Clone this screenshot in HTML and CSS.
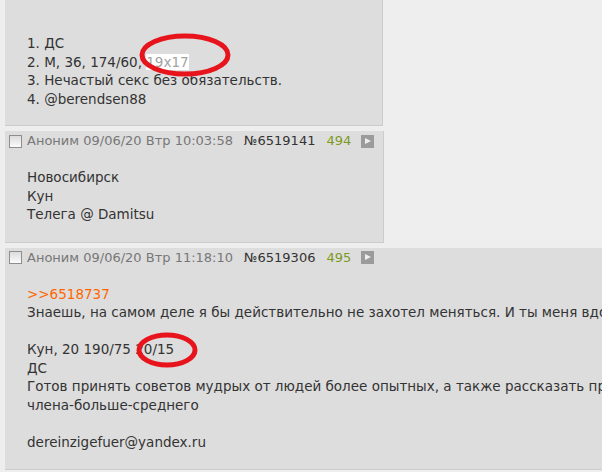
FILE: index.html
```html
<!DOCTYPE html>
<html lang="ru">

<head>
    <meta charset="UTF-8" />
    <meta name="viewport" content="width=device-width, initial-scale=1.0" />
    <title>Тред</title>
    <link rel="stylesheet" href="styles.css">
</head>

<body>
    <div class="thread">

        <!-- пост выше экрана, виден только хвост -->
        <div class="post post-cut">
            <div class="post-message">
                1. ДС<br>
                2. М, 36, 174/60, <span class="selected">19x17</span><br>
                3. Нечастый секс без обязательств.<br>
                4. @berendsen88
            </div>
        </div>

        <div class="post">
            <div class="post-details">
                <span class="turnmeoff"></span>
                <span class="post-name">Аноним 09/06/20 Втр 10:03:58</span>
                <span class="post-num">№6519141</span>
                <span class="post-count">494</span>
                <span class="post-btn"></span>
            </div>
            <div class="post-message">
                Новосибирск<br>
                Кун<br>
                Телега @ Damitsu
            </div>
        </div>

        <div class="post post-wide">
            <div class="post-details">
                <span class="turnmeoff"></span>
                <span class="post-name">Аноним 09/06/20 Втр 11:18:10</span>
                <span class="post-num">№6519306</span>
                <span class="post-count">495</span>
                <span class="post-btn"></span>
            </div>
            <div class="post-message">
                <a class="post-reply" href="#">&gt;&gt;6518737</a><br>
                Знаешь, на самом деле я бы действительно не захотел меняться. И ты меня вдохновил, спасибо тебе.<br>
                <br>
                Кун, 20 190/75 20/15<br>
                ДС<br>
                Готов принять советов мудрых от людей более опытных, а также рассказать про жизнь обладателя<br>
                члена-больше-среднего<br>
                <br>
                dereinzigefuer@yandex.ru
            </div>
        </div>

    </div>

    <!-- пометки поверх скриншота -->
    <svg class="marks" width="602" height="472" viewBox="0 0 602 472">
        <ellipse cx="185" cy="55" rx="43" ry="19" />
        <ellipse cx="167" cy="350" rx="28" ry="15" />
    </svg>
</body>

</html>
```

FILE: styles.css
```css
body {
    margin: 0;
    padding: 0;
    background-color: #eeeeee;
    color: #333333;
    font-family: "DejaVu Sans", Verdana, sans-serif;
    font-size: 13px;
    line-height: 18px;
    overflow: hidden;
    height: 472px;
}

.thread {
    display: flex;
    flex-direction: column;
    align-items: flex-start;
}

.post {
    background-color: #dddddd;
    border-right: 1px solid #cccccc;
    border-bottom: 1px solid #cccccc;
    margin: 0 0 5px 5px;
    padding: 1px 9px 18px 4px;
    box-sizing: border-box;
}

.post-cut {
    width: 378px;
    height: 126px;
    padding-top: 34px;
}

.post-wide {
    width: 1100px;
    flex-shrink: 0;
}

.post-details {
    display: flex;
    align-items: center;
    height: 18px;
    color: #777777;
}

.turnmeoff {
    width: 11px;
    height: 11px;
    border: 1px solid #8e8e8e;
    background: linear-gradient(#dcdcdc, #fbfbfb);
    margin-right: 5px;
}

.post-num {
    color: #333333;
    margin-left: 11px;
}

.post-count {
    color: #7c9a1f;
    margin-left: 11px;
}

.post-btn {
    position: relative;
    width: 13px;
    height: 13px;
    background-color: #9b9b9b;
    margin-left: 10px;
}

.post-btn::after {
    content: "";
    position: absolute;
    left: 4px;
    top: 3px;
    border-left: 6px solid #eeeeee;
    border-top: 3.5px solid transparent;
    border-bottom: 3.5px solid transparent;
}

.post-message {
    margin: 18px 0 0 18px;
    font-size: 13.5px;
    line-height: 18.5px;
    white-space: nowrap;
}

.post-cut .post-message {
    margin-top: 0;
}

.post-reply {
    color: #ff6600;
    text-decoration: none;
}

.selected {
    background-color: #ffffff;
    color: #a3a3a3;
}

.marks {
    position: absolute;
    left: 0;
    top: 0;
    pointer-events: none;
}

.marks ellipse {
    fill: none;
    stroke: #e8141c;
    stroke-width: 5;
}
```
